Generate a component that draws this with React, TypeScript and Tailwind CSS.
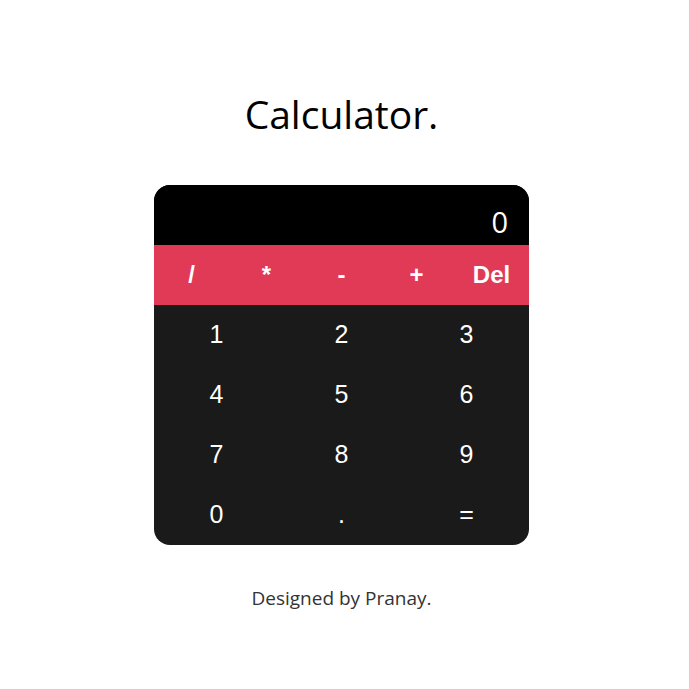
export default function App() {
  const ops = ["/", "*", "-", "+", "Del"];
  const nums = ["1", "2", "3", "4", "5", "6", "7", "8", "9", "0", ".", "="];
  return (
    <div className="min-h-[689px] bg-white flex flex-col items-center pr-[6px]" style={{ fontFamily: '"Liberation Sans", Arial, sans-serif' }}>
      <h1 className="mt-[84px] text-[39px] leading-[60px] text-black" style={{ fontFamily: '"Open Sans", sans-serif' }}>Calculator.</h1>
      <div className="mt-[41px] w-[375px] rounded-[16px] overflow-hidden bg-[#1a1a1a]">
        <div className="h-[60px] bg-black flex items-end justify-end pr-[21px] pb-[9px] text-white text-[29px] leading-[29px]" style={{ fontFamily: '"Open Sans", sans-serif' }}>0</div>
        <div className="h-[60px] bg-[#e13a56] grid grid-cols-5 items-center text-white text-[24px] font-bold">
          {ops.map((o) => (
            <div key={o} className="text-center">{o}</div>
          ))}
        </div>
        <div className="grid grid-cols-3">
          {nums.map((n) => (
            <div key={n} className="h-[60px] flex items-center justify-center text-white text-[25px]">{n}</div>
          ))}
        </div>
      </div>
      <p className="mt-[39px] text-[19px] text-[#333]" style={{ fontFamily: '"Open Sans", sans-serif' }}>Designed by Pranay.</p>
    </div>
  );
}
